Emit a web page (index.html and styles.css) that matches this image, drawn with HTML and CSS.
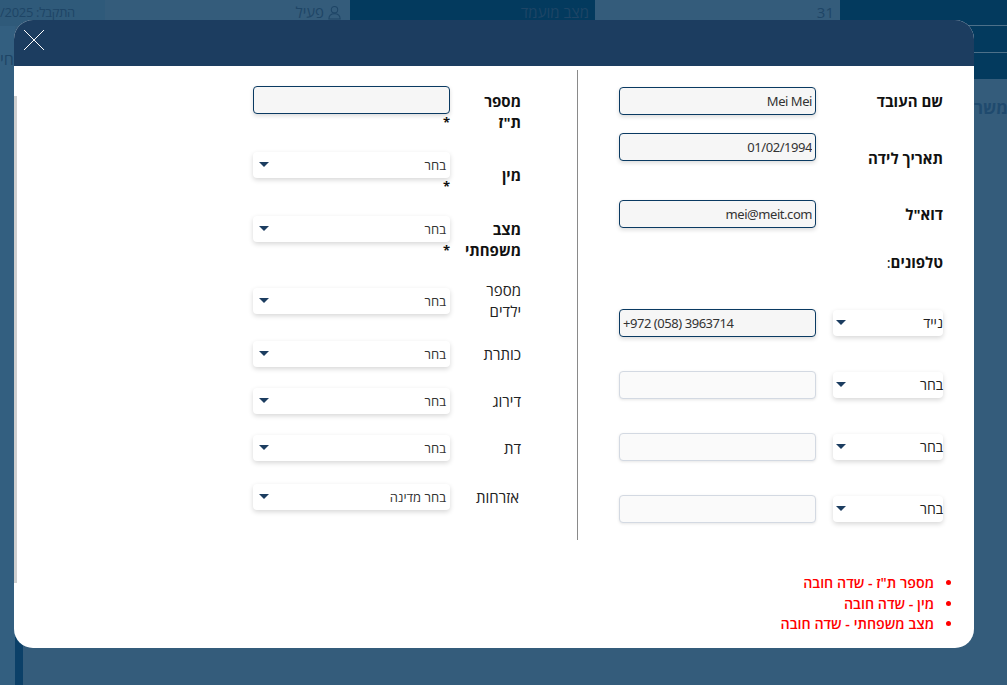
FILE: index.html
```html
<!DOCTYPE html>
<html lang="he" dir="rtl">
<head>
<meta charset="utf-8">
<title>עובד</title>
<link rel="stylesheet" href="styles.css">
</head>
<body>
<div class="page">
  <div class="strip">
    <div class="cell cell-dark cell-tall"></div>
    <div class="cell cell-light"><span class="dim">31</span></div>
    <div class="cell cell-dark"><span class="dim">מצב מועמד</span></div>
    <div class="cell cell-light cell-user">
      <svg class="user" viewBox="0 0 16 16" width="15" height="15"><circle cx="8" cy="5" r="3.4"/><path d="M2 15c0-3.6 2.4-5.6 6-5.6s6 2 6 5.6z"/></svg>
      <span class="dim">פעיל</span>
    </div>
    <div class="cell cell-left"><span class="dim">התקבל: 2025/</span></div>
  </div>
  <div class="under-right">משר</div>
  <div class="under-left">חי</div>
  <div class="under-bar"></div>

  <div class="modal">
    <div class="modal-head">
      <svg class="close" viewBox="0 0 20 20" width="20" height="20"><path d="M0 0L20 20M20 0L0 20"/></svg>
    </div>
    <div class="modal-body">
      <div class="scrollbar"></div>
      <div class="columns">
        <section class="col col-right">
          <div class="row row-name">
            <label class="lbl lbl-b lbl-name">שם העובד</label>
            <input class="field" dir="rtl" value="Mei Mei">
          </div>
          <div class="row row-birth">
            <label class="lbl lbl-b lbl-birth">תאריך לידה</label>
            <input class="field" dir="rtl" value="01/02/1994">
          </div>
          <div class="row row-mail">
            <label class="lbl lbl-b lbl-name">דוא"ל</label>
            <input class="field field-end" dir="ltr" value="mei@meit.com">
          </div>
          <div class="phones-title">טלפונים<span class="colon">:</span></div>
          <div class="phones">
            <div class="phone">
              <div class="select select-p"><span>נייד</span><i class="arrow"></i></div>
              <input class="field" dir="ltr" value="+972 (058) 3963714">
            </div>
            <div class="phone">
              <div class="select select-p"><span>בחר</span><i class="arrow"></i></div>
              <input class="field field-off">
            </div>
            <div class="phone">
              <div class="select select-p"><span>בחר</span><i class="arrow"></i></div>
              <input class="field field-off">
            </div>
            <div class="phone">
              <div class="select select-p"><span>בחר</span><i class="arrow"></i></div>
              <input class="field field-off">
            </div>
          </div>
        </section>

        <section class="col col-left">
          <div class="lrow lrow-id">
            <label class="llbl lbl-b">מספר ת"ז</label>
            <div class="ctl"><input class="field field-wide"><b class="star">*</b></div>
          </div>
          <div class="lrow lrow-gender">
            <label class="llbl lbl-b llbl-drop">מין</label>
            <div class="ctl"><div class="select"><span>בחר</span><i class="arrow"></i></div><b class="star">*</b></div>
          </div>
          <div class="lrow lrow-family">
            <label class="llbl lbl-b">מצב משפחתי</label>
            <div class="ctl"><div class="select"><span>בחר</span><i class="arrow"></i></div><b class="star">*</b></div>
          </div>
          <div class="lrow lrow-kids">
            <label class="llbl">מספר ילדים</label>
            <div class="ctl"><div class="select"><span>בחר</span><i class="arrow"></i></div></div>
          </div>
          <div class="lrow lrow-one">
            <label class="llbl">כותרת</label>
            <div class="ctl"><div class="select"><span>בחר</span><i class="arrow"></i></div></div>
          </div>
          <div class="lrow lrow-one">
            <label class="llbl">דירוג</label>
            <div class="ctl"><div class="select"><span>בחר</span><i class="arrow"></i></div></div>
          </div>
          <div class="lrow lrow-one lrow-tall">
            <label class="llbl">דת</label>
            <div class="ctl"><div class="select"><span>בחר</span><i class="arrow"></i></div></div>
          </div>
          <div class="lrow lrow-one">
            <label class="llbl llbl-in">אזרחות</label>
            <div class="ctl"><div class="select"><span>בחר מדינה</span><i class="arrow"></i></div></div>
          </div>
        </section>
      </div>
      <ul class="errors">
        <li>מספר ת"ז - שדה חובה</li>
        <li>מין - שדה חובה</li>
        <li>מצב משפחתי - שדה חובה</li>
      </ul>
    </div>
  </div>
</div>
</body>
</html>
```
FILE: styles.css
```css
* { box-sizing: border-box; }
html, body { margin: 0; height: 100%; }
body {
  font-family: "Open Sans", "Noto Sans", "Liberation Sans", sans-serif;
  overflow: hidden;
}
.page {
  position: relative;
  height: 685px;
  overflow: hidden;
  background-color: #345c7b;
  background-image:
    linear-gradient(#335f80, #335f80),
    radial-gradient(circle, rgba(110,140,165,.5) 0.5px, transparent 0.7px);
  background-size: 15px 100%, 14px 14px;
  background-repeat: no-repeat, repeat;
}
.strip {
  display: grid;
  grid-template-columns: 167px 245px 245px 245px 105px;
  align-items: start;
}
.cell {
  height: 26px;
  display: flex;
  align-items: flex-start;
  padding: 2px 6px 0;
  font-size: 15px;
  color: #1e4566;
  gap: 3px;
}
.cell-user { padding-right: 8px; }
.cell-dark { background: #033a5e; }
.cell-light { background: #345c7b; }
.cell-left {
  background: #2f5a7a;
  font-size: 13px;
  letter-spacing: -.3px;
  padding: 3px 30px 0 0;
}
.cell-tall {
  height: 79px;
  background: #033a5e;
  background-image: linear-gradient(#4d7089, #4d7089), linear-gradient(#4d7089, #4d7089);
  background-size: 100% 1px, 100% 1px;
  background-position: 0 25px, 0 52px;
  background-repeat: no-repeat;
}
.dim { white-space: nowrap; }
.user { fill: none; stroke: #1e4566; stroke-width: 1.1; margin-top: 3px; }
.under-right {
  position: absolute;
  top: 96px;
  right: -1px;
  width: 33px;
  font-size: 17px;
  font-weight: 700;
  color: #1f4a6e;
  white-space: nowrap;
}
.under-left {
  position: absolute;
  top: 48px;
  left: 0;
  font-size: 16px;
  color: #1e4566;
}
.under-bar {
  position: absolute;
  left: 15px;
  top: 630px;
  width: 8px;
  height: 55px;
  background: #0b4068;
}
.modal {
  position: absolute;
  left: 14px;
  top: 20px;
  width: 960px;
  height: 628px;
  border-radius: 19px;
  overflow: hidden;
  background: #fff;
  display: flex;
  flex-direction: column;
}
.modal-head {
  height: 46px;
  flex: none;
  background: #1c3d60;
  display: flex;
  justify-content: flex-end;
  padding: 10px 10px 0 0;
}
.close { stroke: #fff; stroke-width: 1; fill: none; margin-left: 10px; }
.modal-body { position: relative; flex: 1; display: flex; flex-direction: column; }
.scrollbar {
  position: absolute;
  left: 0;
  top: 30px;
  width: 3px;
  height: 487px;
  background: #cfcfcf;
}
.columns {
  display: flex;
  height: 470px;
  margin-top: 4px;
  padding-right: 31px;
}
.col-right { width: 365px; flex: none; }
.col-left {
  flex: none;
  width: 397px;
  border-right: 1px solid #8a8a8a;
  padding-right: 56px;
}
.lbl-b { font-weight: 700; }
.row { display: flex; justify-content: space-between; align-items: flex-start; width: 324px; }
.row-name { padding-top: 17px; height: 63px; }
.row-birth { height: 67px; }
.row-mail { height: 50px; }
.lbl { font-size: 15px; line-height: 22px; color: #111; white-space: nowrap; }
.lbl-name { padding-top: 3px; }
.lbl-birth { padding-top: 14px; }
.field {
  width: 197px;
  height: 28px;
  flex: none;
  border: 1px solid #0a3a62;
  border-radius: 4px;
  background: #f6f6f6;
  box-shadow: 0 2px 4px rgba(0,0,0,.14);
  font: 400 13px "Noto Sans", "Open Sans", sans-serif;
  letter-spacing: -.45px;
  color: #333;
  padding: 0 3px;
  outline: none;
}
.field-end { text-align: right; }
.field-off { border-color: #d3d9e2; background: #fafafa; box-shadow: 0 1px 3px rgba(0,0,0,.1); }
.phones-title {
  font-size: 15px;
  font-weight: 700;
  line-height: 22px;
  color: #111;
  height: 58px;
  margin-top: 1px;
}
.colon { font-weight: 400; }
.phones { display: flex; flex-direction: column; gap: 34px; width: 324px; }
.phone { display: flex; justify-content: space-between; align-items: flex-start; }
.select {
  width: 197px;
  height: 26px;
  background: #fff;
  border-radius: 4px;
  box-shadow: 0 2px 5px rgba(0,0,0,.16);
  display: flex;
  justify-content: space-between;
  padding: 0 4px 0 6px;
  font-size: 13px;
  line-height: 26px;
  color: #333;
}
.select-p { width: 110px; margin-top: 1px; font-size: 14px; padding: 0 0 0 3px; color: #222; }
.arrow {
  width: 0;
  height: 0;
  margin-top: 10px;
  border-left: 5px solid transparent;
  border-right: 5px solid transparent;
  border-top: 5px solid #1c3d60;
}
.lrow { display: flex; justify-content: flex-start; align-items: flex-start; }
.llbl {
  width: 71px;
  flex: none;
  padding-left: 16px;
  font-size: 15px;
  line-height: 21px;
  color: #222;
}
.llbl.lbl-b { color: #111; }
.ctl { position: relative; width: 197px; }
.field-wide { display: block; }
.star {
  position: absolute;
  right: 0;
  top: 100%;
  margin-top: 1px;
  font-size: 13px;
  line-height: 14px;
  color: #111;
}
.lrow-id { padding-top: 16px; height: 82px; }
.lrow-id .llbl { margin-top: 5px; }
.lrow-gender { height: 64px; }
.llbl-drop { padding-top: 13px; }
.lrow-family { height: 72px; }
.lrow-family .llbl { margin-top: 3px; }
.lrow-kids { height: 53px; }
.lrow-kids .llbl { margin-top: -8px; }
.lrow-one { height: 47px; }
.lrow-tall { height: 49px; }
.lrow-one .llbl { margin-top: 3px; }
.llbl-in { padding-right: 2px; }
.errors {
  margin: 33px 0 0;
  padding: 0 40px 0 0;
  font-size: 14.25px;
  font-weight: 600;
  line-height: 20.5px;
  color: #ff0000;
}
```
